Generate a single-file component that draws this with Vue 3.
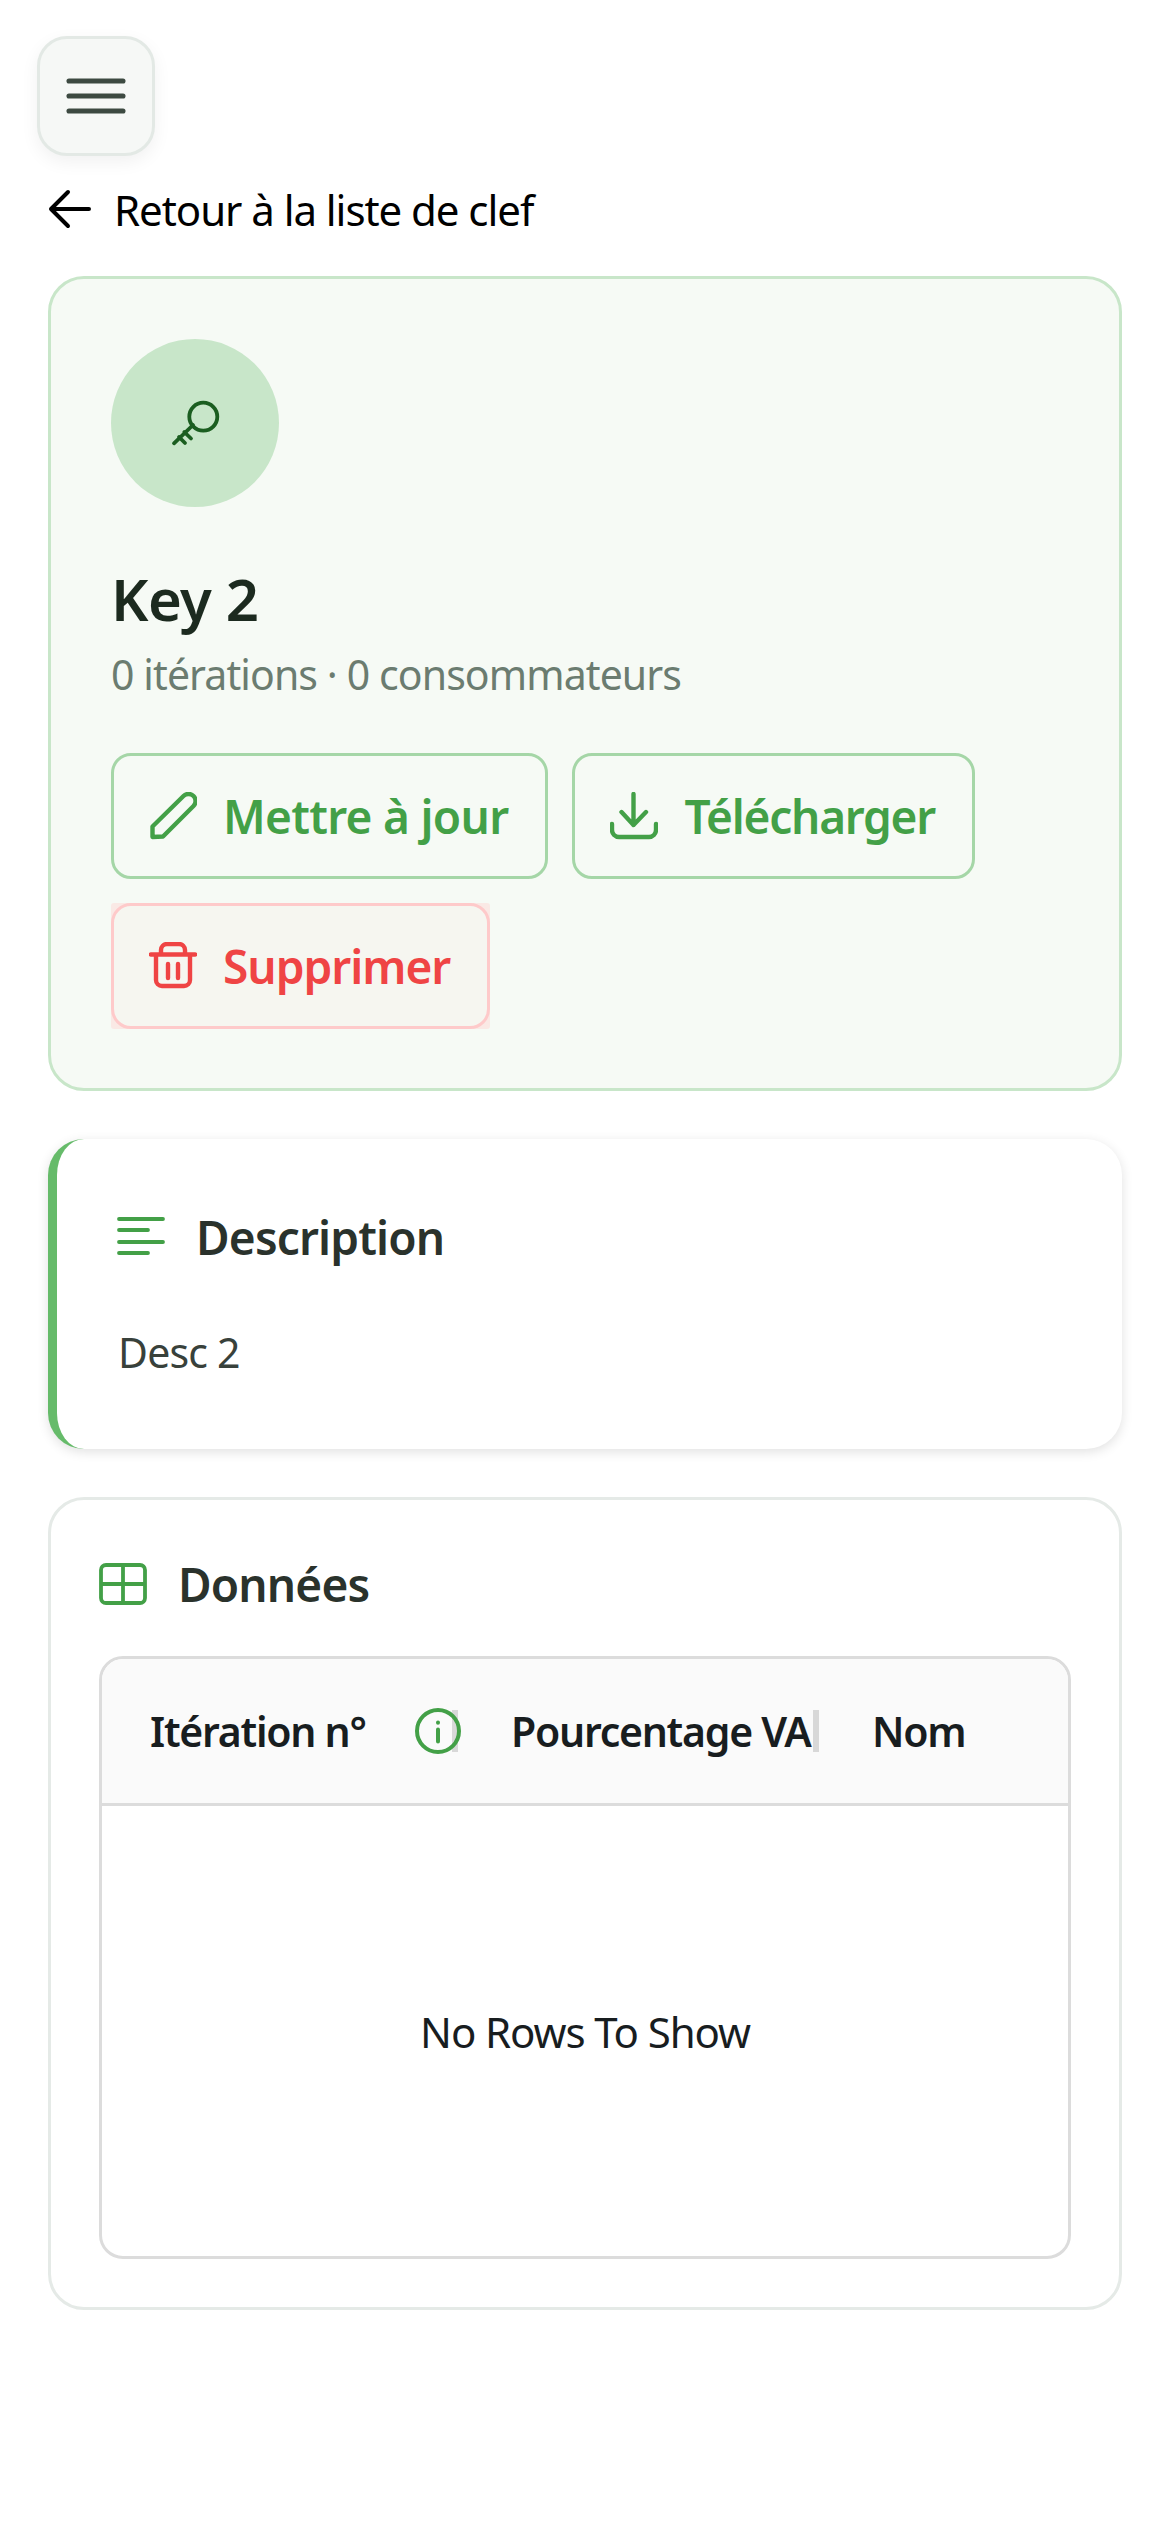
<template>
  <div class="page">
    <button class="menu-btn" type="button" aria-label="Menu">
      <svg width="72" height="72" viewBox="0 0 24 24" fill="none" stroke="#3d4a41" stroke-width="1.7" stroke-linecap="round">
        <path d="M3 7h18M3 12h18M3 17h18" />
      </svg>
    </button>

    <main class="content">
      <a class="back-link">
        <svg width="44" height="40" viewBox="0 0 44 40" fill="none" stroke="#000" stroke-width="4" stroke-linecap="round" stroke-linejoin="round">
          <path d="M41 20H3M20 3 3 20l17 17" />
        </svg>
        <span>Retour à la liste de clef</span>
      </a>

      <section class="key-card">
        <div class="key-avatar">
          <svg width="64" height="64" viewBox="-2 1 64 64" fill="none" stroke="#1b5e20" stroke-width="3.8" stroke-linecap="round">
            <circle cx="38.3" cy="26.7" r="14" />
            <path d="M28 35 9 53.3M19.3 42 26 48.5M14 47l6 6" />
          </svg>
        </div>
        <h1 class="key-title">Key 2</h1>
        <p class="key-meta">0 itérations · 0 consommateurs</p>

        <div class="actions">
          <button class="action update" type="button">
            <svg width="48" height="48" viewBox="0 0 48 48" fill="none" stroke="currentColor" stroke-width="4.4" stroke-linejoin="round">
              <path d="M3.5 45 3.5 34.5 34.5 4A7 7 0 0 1 44.5 14L14 44.5Z" />
            </svg>
            Mettre à jour
          </button>
          <button class="action download" type="button">
            <svg width="48" height="48" viewBox="0 0 48 48" fill="none" stroke="currentColor" stroke-width="4.4" stroke-linecap="round" stroke-linejoin="round">
              <path d="M23.5 2v31M11.5 20l12 13 12.5-13M2 32v6a7 7 0 0 0 7 7h30a7 7 0 0 0 7-7v-6" />
            </svg>
            Télécharger
          </button>
          <div class="danger-wrap">
            <button class="action danger" type="button">
              <svg width="48" height="48" viewBox="0 0 48 48" fill="none" stroke="currentColor" stroke-width="4.4" stroke-linecap="round" stroke-linejoin="round">
                <path d="M2 12.5h44M12 12V8a6 6 0 0 1 6-6h12a6 6 0 0 1 6 6v4M7 12.5V38a6 6 0 0 0 6 6h22a6 6 0 0 0 6-6V12.5M19 22v14M29 22v14" />
              </svg>
              Supprimer
            </button>
          </div>
        </div>
      </section>

      <section class="desc-card">
        <div class="section-head">
          <svg width="48" height="40" viewBox="0 0 48 40" fill="none" stroke="#43a047" stroke-width="3.8" stroke-linecap="round">
            <path d="M2 2h44M2 13h29M2 25h44M2 36h29" />
          </svg>
          <h2>Description</h2>
        </div>
        <p class="desc-text">Desc 2</p>
      </section>

      <section class="data-card">
        <div class="section-head data-head">
          <svg width="48" height="42" viewBox="0 0 48 42" fill="none" stroke="#43a047" stroke-width="3.8">
            <rect x="2" y="2" width="44" height="38" rx="5" />
            <path d="M24 2v38M2 21h44" />
          </svg>
          <h2>Données</h2>
        </div>

        <div class="grid">
          <div class="grid-header">
            <div v-for="col in columns" :key="col.name" class="grid-cell">
              <span class="col-name">{{ col.name }}</span>
              <svg v-if="col.info" class="info" width="48" height="48" viewBox="0 0 48 48" fill="none" stroke="#43a047" stroke-width="4" stroke-linecap="round">
                <circle cx="24" cy="24" r="21" />
                <path d="M24 22.5v12M24 15.5v.2" />
              </svg>
              <span v-if="col.handle" class="resize-handle"></span>
            </div>
          </div>
          <div class="grid-body">No Rows To Show</div>
        </div>
      </section>
    </main>
  </div>
</template>

<script setup>
const columns = [
  { name: 'Itération n°', info: true, handle: true },
  { name: 'Pourcentage VA', handle: true },
  { name: 'Nom' },
]
</script>

<style scoped>
.page {
  min-height: 2532px;
  box-sizing: border-box;
  background: #fff;
  font-family: "Noto Sans", "Open Sans", sans-serif;
  padding-top: 36px;
  overflow: hidden;
}

.menu-btn {
  display: flex;
  align-items: center;
  justify-content: center;
  box-sizing: border-box;
  width: 118px;
  height: 120px;
  margin-left: 37px;
  padding: 0;
  background: #f6f8f6;
  border: 3px solid #e3e9e5;
  border-radius: 30px;
  box-shadow: 0 6px 18px rgba(0, 0, 0, 0.06);
}

.content {
  padding: 0 48px;
}

.back-link {
  display: flex;
  align-items: center;
  gap: 22px;
  height: 52px;
  margin-top: 27px;
  font-size: 42px;
  letter-spacing: -1.05px;
  color: #000;
}

.key-card {
  box-sizing: border-box;
  height: 815px;
  margin-top: 41px;
  padding: 60px;
  background: #f6faf5;
  border: 3px solid #c8e6c9;
  border-radius: 36px;
}

.key-avatar {
  display: flex;
  align-items: center;
  justify-content: center;
  width: 168px;
  height: 168px;
  border-radius: 50%;
  background: #c8e6c9;
}

.key-title {
  margin: 54px 0 0;
  font-size: 58px;
  line-height: 76px;
  font-weight: 600;
  letter-spacing: -0.6px;
  color: #1c2a1f;
}

.key-meta {
  margin: 10px 0 0;
  font-size: 41px;
  line-height: 54px;
  letter-spacing: -0.9px;
  color: #6b7c70;
}

.actions {
  display: flex;
  flex-wrap: wrap;
  gap: 24px;
  margin-top: 52px;
}

.action {
  display: flex;
  align-items: center;
  gap: 26px;
  box-sizing: border-box;
  height: 126px;
  padding: 0 37px 0 35px;
  background: transparent;
  border: 3px solid #a5d6a7;
  border-radius: 20px;
  font-family: inherit;
  font-size: 46px;
  font-weight: 600;
  letter-spacing: -0.8px;
  color: #43a047;
}

.action.update {
  letter-spacing: -0.7px;
}

.action.download {
  letter-spacing: -1.25px;
}

.danger-wrap {
  background: #fae9e5;
  border-radius: 3px;
}

.action.danger {
  background: #f6f6f0;
  border-color: #fecaca;
  letter-spacing: -1px;
  color: #ef4444;
}

.desc-card {
  box-sizing: border-box;
  height: 310px;
  margin-top: 48px;
  padding: 60px;
  background: #fff;
  border-left: 9px solid #66bb6a;
  border-radius: 36px;
  box-shadow: 0 3px 12px rgba(0, 0, 0, 0.12);
}

.section-head {
  display: flex;
  align-items: center;
  gap: 31px;
  height: 76px;
}

.section-head h2 {
  margin: 0;
  font-size: 46px;
  font-weight: 600;
  letter-spacing: -0.85px;
  color: #2a322c;
}

.desc-text {
  margin: 51px 0 0 1px;
  font-size: 41px;
  line-height: 52px;
  letter-spacing: -0.8px;
  color: #38413b;
}

.data-card {
  box-sizing: border-box;
  height: 813px;
  margin-top: 48px;
  padding: 48px;
  background: #fff;
  border: 3px solid #e5eae7;
  border-radius: 36px;
}

.data-head {
  height: 72px;
  margin-bottom: 36px;
}

.grid {
  box-sizing: border-box;
  height: 603px;
  display: flex;
  flex-direction: column;
  background: #fff;
  border: 3px solid #dcdcdc;
  border-radius: 24px;
  overflow: hidden;
}

.grid-header {
  display: grid;
  grid-template-columns: repeat(3, 361px);
  box-sizing: border-box;
  height: 147px;
  flex-shrink: 0;
  background: #fafafa;
  border-bottom: 3px solid #dcdcdc;
}

.grid-cell {
  position: relative;
  display: flex;
  align-items: center;
  padding-left: 48px;
  font-size: 41px;
  font-weight: 600;
  letter-spacing: -1.25px;
  color: #181d1f;
  white-space: nowrap;
}

.info {
  position: relative;
  z-index: 1;
  flex-shrink: 0;
  margin-left: 48px;
}

.resize-handle {
  position: absolute;
  top: 51px;
  right: 5px;
  width: 6px;
  height: 42px;
  background: #d8d8d8;
}

.grid-body {
  flex: 1;
  display: flex;
  align-items: center;
  justify-content: center;
  font-size: 42px;
  letter-spacing: -1.1px;
  color: #181d1f;
}
</style>
